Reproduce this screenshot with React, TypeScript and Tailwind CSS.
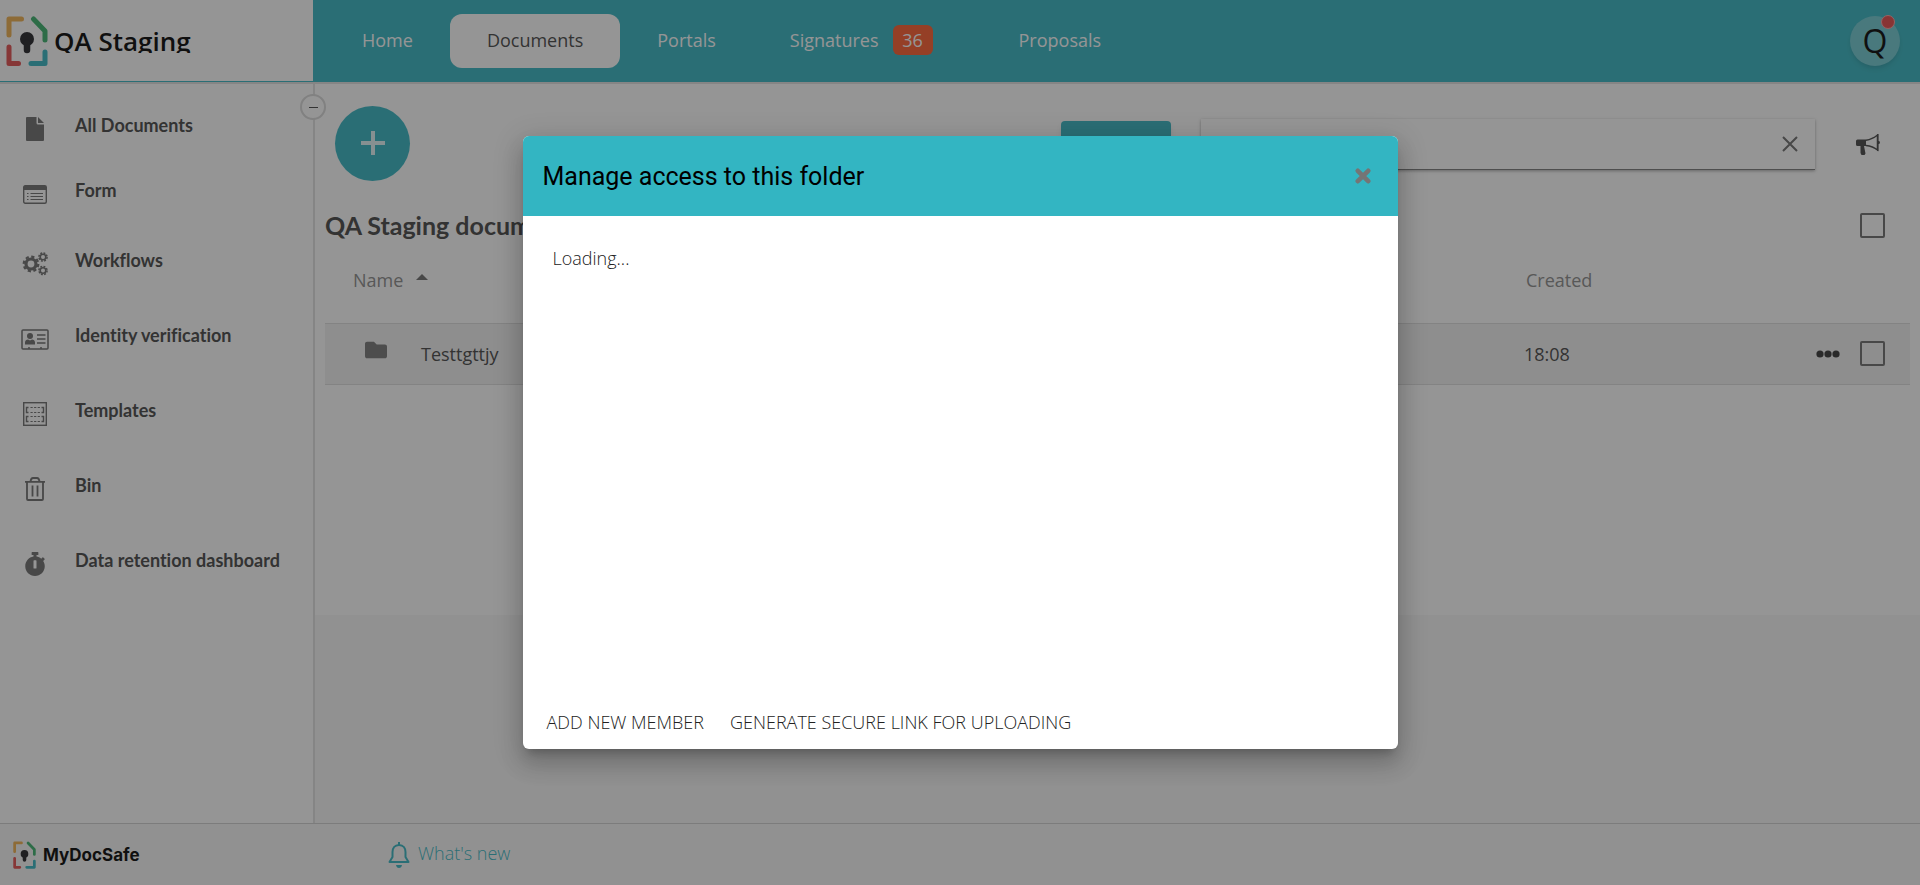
import React from "react";
import { FaStopwatch, FaFolder } from "react-icons/fa";

function LogoMark({ className }: { className: string }) {
  return (
    <svg viewBox="0 0 42 50" fill="none" strokeWidth="5" strokeLinecap="round" strokeLinejoin="round" className={className} aria-hidden="true">
      <path d="M3 19V3h12.500" stroke="#f0ae4b" />
      <path d="M27.500 3L39 15v9" stroke="#39b06a" />
      <path d="M3 31v16.500h9.500" stroke="#e24b4b" />
      <path d="M39 36v11.500H25" stroke="#33b5c2" />
      <circle cx="21" cy="23" r="7" fill="#1f1f24" />
      <path d="M21 27v7" stroke="#1f1f24" strokeWidth="6.500" />
    </svg>
  );
}

function FileIcon() {
  return (
    <svg viewBox="0 0 18 24" className="h-6 w-[18px]" fill="currentColor" aria-hidden="true">
      <path d="M1 0H10.500v6A1.500 1.500 0 0 0 12 7.500H18V23a1 1 0 0 1-1 1H1a1 1 0 0 1-1-1V1a1 1 0 0 1 1-1zM12 0l6 6h-6z" />
    </svg>
  );
}

function FormIcon() {
  return (
    <svg viewBox="0 0 24 19" className="h-[19px] w-6" fill="none" stroke="currentColor" aria-hidden="true">
      <rect x=".7" y=".7" width="22.600" height="17.600" rx="1.500" strokeWidth="1.400" />
      <path d="M1 1h22v4H1z" fill="currentColor" stroke="none" />
      <path d="M7.500 8.500H20M7.500 11.500H20M7.500 14.500H20M4 8.500h1.500M4 11.500h1.500M4 14.500h1.500" strokeWidth="1.200" />
    </svg>
  );
}

function GearsIcon() {
  return (
    <svg viewBox="0 0 26 24" className="h-6 w-[26px]" fill="none" stroke="currentColor" aria-hidden="true">
      <circle cx="9" cy="12" r="5" strokeWidth="3.200" />
      <circle cx="9" cy="12" r="7.300" strokeWidth="2.200" strokeDasharray="3.200 2.533" />
      <circle cx="21" cy="5" r="2.800" strokeWidth="1.600" />
      <circle cx="21" cy="5" r="4.100" strokeWidth="1.500" strokeDasharray="1.900 1.320" />
      <circle cx="21" cy="18.500" r="2.800" strokeWidth="1.600" />
      <circle cx="21" cy="18.500" r="4.100" strokeWidth="1.500" strokeDasharray="1.900 1.320" />
    </svg>
  );
}

function IdIcon() {
  return (
    <svg viewBox="0 0 28 21" className="h-[21px] w-7" fill="none" stroke="currentColor" aria-hidden="true">
      <rect x="1" y="1" width="26" height="19" rx="1" strokeWidth="1.500" />
      <circle cx="9" cy="7" r="3" fill="currentColor" stroke="none" />
      <path d="M4 15.500v-2c0-2 1.500-3 3-3l2 1 2-1c1.500 0 3 1 3 3v2z" fill="currentColor" stroke="none" />
      <path d="M16 6h8.500M16 10h8.500M16 14h8.500M8 18v2M20 18v2" strokeWidth="1.500" />
    </svg>
  );
}

function TemplateIcon() {
  return (
    <svg viewBox="0 0 24 24" className="size-6" fill="none" stroke="currentColor" aria-hidden="true">
      <rect x=".7" y=".7" width="22.600" height="22.600" strokeWidth="1.400" />
      <path d="M5.500 5.500h-2v5h2M18.500 5.500h2v5h-2M5.500 14.500h-2v5h2M18.500 14.500h2v5h-2" strokeWidth="1.400" />
      <path d="M7.500 5.500h9.500M7.500 10.500h9.500M7.500 14.500h9.500M7.500 19.500h9.500" strokeWidth="1.200" strokeDasharray="2.200 1.400" />
    </svg>
  );
}

function BinIcon() {
  return (
    <svg viewBox="0 0 20 24" className="h-6 w-5" fill="none" stroke="currentColor" strokeWidth="1.800" aria-hidden="true">
      <path d="M0 4.800h20M2 5v17q0 1 1 1h14q1 0 1-1V5M5.500 4.500Q6 1 8 1h4q2 0 2.500 3.500" />
      <path d="M7.500 8.500v11M12.500 8.500v11" />
    </svg>
  );
}

function MegaphoneIcon() {
  return (
    <svg viewBox="0 0 24 21" className="h-[21px] w-6" fill="currentColor" aria-hidden="true">
      <path d="M1.500 5.500H10V12H8l1.500 7.500-1 1.500H5.500L4.500 19V12h-3A1.500 1.500 0 0 1 0 10.500V7a1.500 1.500 0 0 1 1.500-1.500z" />
      <path d="M10 6.200C15 5.500 18.500 3.500 21.500 1v15c-3-2.500-6.500-4-11.500-4.500" fill="none" stroke="currentColor" strokeWidth="1.500" />
      <path d="M21 0h1.500v17H21zM22 6.500q2 .5 2 2t-2 2z" />
    </svg>
  );
}

function BellIcon() {
  return (
    <svg viewBox="0 0 22 26" className="h-[26px] w-[22px]" fill="none" stroke="currentColor" strokeWidth="2" strokeLinejoin="round" aria-hidden="true">
      <path d="M11 0v3M11 3C6.500 3 4.500 6.500 4.500 10v5L1.500 20h19L17.500 15v-5C17.500 6.500 15.500 3 11 3z" />
      <path d="M8 23h6q-.5 3-3 3t-3-3z" fill="currentColor" stroke="none" />
    </svg>
  );
}

const sideItems = [
  { label: "All Documents", icon: <FileIcon />, height: "h-[65px]" },
  { label: "Form", icon: <FormIcon />, height: "h-[70px]" },
  { label: "Workflows", icon: <GearsIcon />, height: "h-[75px]" },
  { label: "Identity verification", icon: <IdIcon />, height: "h-[75px]" },
  { label: "Templates", icon: <TemplateIcon />, height: "h-[75px]" },
  { label: "Bin", icon: <BinIcon />, height: "h-[75px]" },
  { label: "Data retention dashboard", icon: <FaStopwatch className="size-6" />, height: "h-[75px]" },
];

const navLink = "flex h-[54px] items-center rounded-xl px-[37px] pb-0.5";

function Checkbox({ label }: { label: string }) {
  return <input type="checkbox" aria-label={label} className="block size-[25px] appearance-none rounded-xs border-2 border-[#6b6b6b]" />;
}

export default function App() {
  return (
    <div className="relative flex min-h-screen flex-col bg-white font-['Open_Sans',sans-serif] text-lg leading-6 text-[#444]">
      <header className="flex h-[84px] border-b-2 border-[#e0e0e0] bg-[#33b5c2] text-white">
        <div className="flex w-[313px] shrink-0 items-center border-b border-[#33b5c2] bg-white pl-[6px]">
          <LogoMark className="h-[50px] w-[42px]" />
          <div className="ml-1.5 h-[25px] overflow-hidden text-[26px] leading-[26px] font-semibold text-black">QA Staging</div>
        </div>
        <nav className="flex flex-1 items-center pl-3">
          <a href="#" className={navLink}>Home</a>
          <a href="#" className={navLink + " bg-white text-[#444]"}>Documents</a>
          <a href="#" className={navLink}>Portals</a>
          <a href="#" className={navLink}>
            Signatures
            <span className="mr-3 ml-3.5 flex h-[30px] w-10 items-center justify-center rounded-md bg-[#ff5a2b]">36</span>
          </a>
          <a href="#" className={navLink}>Proposals</a>
        </nav>
        <button aria-label="Account" className="relative mr-5 size-[50px] self-center rounded-full bg-[#6ec9d2] text-[32px] leading-[50px] text-black shadow-md">
          Q
          <span className="absolute -top-px right-[5px] size-[14px] rounded-full border border-[#ffa0a0] bg-[#e64545]" />
        </button>
      </header>

      <div className="flex flex-1">
        <aside className="relative w-[315px] shrink-0 border-r-2 border-[#e0e0e0] pt-[27px]">
          <button aria-label="Collapse sidebar" className="absolute top-[10px] -right-[13px] flex size-[26px] items-center justify-center rounded-full border-2 border-[#d8d8d8] bg-white">
            <span className="h-px w-[9px] bg-[#444]" />
          </button>
          <nav className="font-['Lato',sans-serif] text-lg leading-7 font-bold [font-variant-ligatures:none]">
            {sideItems.map((item) => (
              <a href="#" key={item.label} className={"flex items-start " + item.height}>
                <span className="flex h-9 w-[75px] shrink-0 items-center pr-1 text-[#6b6b6b]">
                  <span className="flex w-[70px] justify-center">{item.icon}</span>
                </span>
                {item.label}
              </a>
            ))}
          </nav>
        </aside>

        <main className="flex min-w-0 flex-1 flex-col bg-[#f8f8f8]">
          <div className="min-h-[531px] bg-white px-2.5">
            <div className="flex h-[120px] items-center pl-2.5">
              <button aria-label="Add" className="mb-0.5 flex size-[75px] items-center justify-center rounded-full bg-[#33b5c2]">
                <svg viewBox="0 0 24 24" className="size-6" stroke="#e3f5f7" strokeWidth="4" aria-hidden="true">
                  <path d="M12 0v24M0 12h24" />
                </svg>
              </button>
              <button className="ml-auto h-[46px] w-[110px] rounded-sm bg-[#33b5c2] text-white shadow-md">Search</button>
              <div className="ml-[30px] flex h-[51px] w-[614px] items-center border-b border-[#777] bg-white shadow-[0_1px_3px_rgba(0,0,0,0.35)]">
                <input aria-label="Search documents" className="h-full min-w-0 flex-1 px-3 outline-none" />
                <button aria-label="Clear" className="mr-[17px] text-[#6b6b6b]">
                  <svg viewBox="0 0 16 16" className="size-4" stroke="currentColor" strokeWidth="2" aria-hidden="true">
                    <path d="M1 1l14 14M15 1L1 15" />
                  </svg>
                </button>
              </div>
              <button aria-label="Announcements" className="mr-[30px] ml-[41px] text-[#444]"><MegaphoneIcon /></button>
            </div>
            <div className="flex h-[42px] items-center justify-between pr-[25px]">
              <h1 className="font-['Lato',sans-serif] text-[25px] leading-8 font-bold">QA Staging documents</h1>
              <Checkbox label="Select all" />
            </div>
            <table className="w-full table-fixed text-left">
              <thead className="text-[#8a8a8a]">
                <tr className="h-[77px] align-top">
                  <th className="pt-[22px] pl-7 font-normal">
                    <span className="flex items-center gap-[13px]">
                      Name
                      <svg viewBox="0 0 12 6" className="mb-1.5 h-1.5 w-3" fill="#6b6b6b" aria-hidden="true"><path d="M0 6l6-6 6 6z" /></svg>
                    </span>
                  </th>
                  <th className="w-[274px] pt-[22px] pl-0.5 font-normal">Created</th>
                  <th className="w-[112px]" aria-label="Actions" />
                </tr>
              </thead>
              <tbody>
                <tr className="h-[61px] border-y border-[#dcdcdc] bg-[#f1f1f1]">
                  <td className="pl-10">
                    <span className="flex items-center">
                      <FaFolder className="mb-2 size-[22px] text-[#757575]" />
                      <span className="ml-[34px]">Testtgttjy</span>
                    </span>
                  </td>
                  <td>18:08</td>
                  <td>
                    <span className="flex items-center justify-between pr-[25px] pl-[18px]">
                      <button aria-label="More actions">
                        <svg viewBox="0 0 24 8" className="h-2 w-6" fill="#333" aria-hidden="true"><circle cx="4" cy="4" r="3.600" /><circle cx="12" cy="4" r="3.600" /><circle cx="20" cy="4" r="3.600" /></svg>
                      </button>
                      <Checkbox label="Select Testtgttjy" />
                    </span>
                  </td>
                </tr>
              </tbody>
            </table>
          </div>
        </main>
      </div>

      <footer className="flex h-[62px] items-center border-t border-[#d0d0d0] bg-[#f8f8f8] pl-[13px]">
        <div className="flex w-[375px] items-center gap-[7px]">
          <LogoMark className="h-7 w-[23px]" />
          <span className="font-['Inter',sans-serif] text-[17px] font-bold text-black">MyDocSafe</span>
        </div>
        <a href="#" className="flex items-center gap-2 font-light text-[#33b5c2]">
          <BellIcon />
          <span className="pb-1">What's new</span>
        </a>
      </footer>

      <div className="absolute inset-0 flex items-center justify-center bg-[#212121]/48">
        <div role="dialog" aria-labelledby="dialog-title" className="flex h-[613px] w-[875px] flex-col overflow-hidden rounded-md bg-white shadow-[0_8px_9px_-5px_rgba(0,0,0,0.2),0_15px_22px_2px_rgba(0,0,0,0.14),0_6px_28px_5px_rgba(0,0,0,0.12)]">
          <div className="flex h-20 shrink-0 items-center justify-between bg-[#33b5c2] pr-[27px] pl-5">
            <h2 id="dialog-title" className="pt-0.5 font-['Roboto',sans-serif] text-[25px] leading-8 text-black">Manage access to this folder</h2>
            <button aria-label="Close" className="text-[#757575]">
              <svg viewBox="0 0 16 16" className="size-4" stroke="currentColor" strokeWidth="4.600" strokeLinecap="round" aria-hidden="true">
                <path d="M2.800 2.800l10.400 10.400M13.200 2.800L2.800 13.200" />
              </svg>
            </button>
          </div>
          <div className="flex-1 px-[30px] pt-[30px] font-light text-[#212121]">Loading...</div>
          <div className="flex h-[52px] items-center gap-[26px] pb-0.5 pl-6 font-light text-[#212121]">
            <button>ADD NEW MEMBER</button>
            <button>GENERATE SECURE LINK FOR UPLOADING</button>
          </div>
        </div>
      </div>
    </div>
  );
}
